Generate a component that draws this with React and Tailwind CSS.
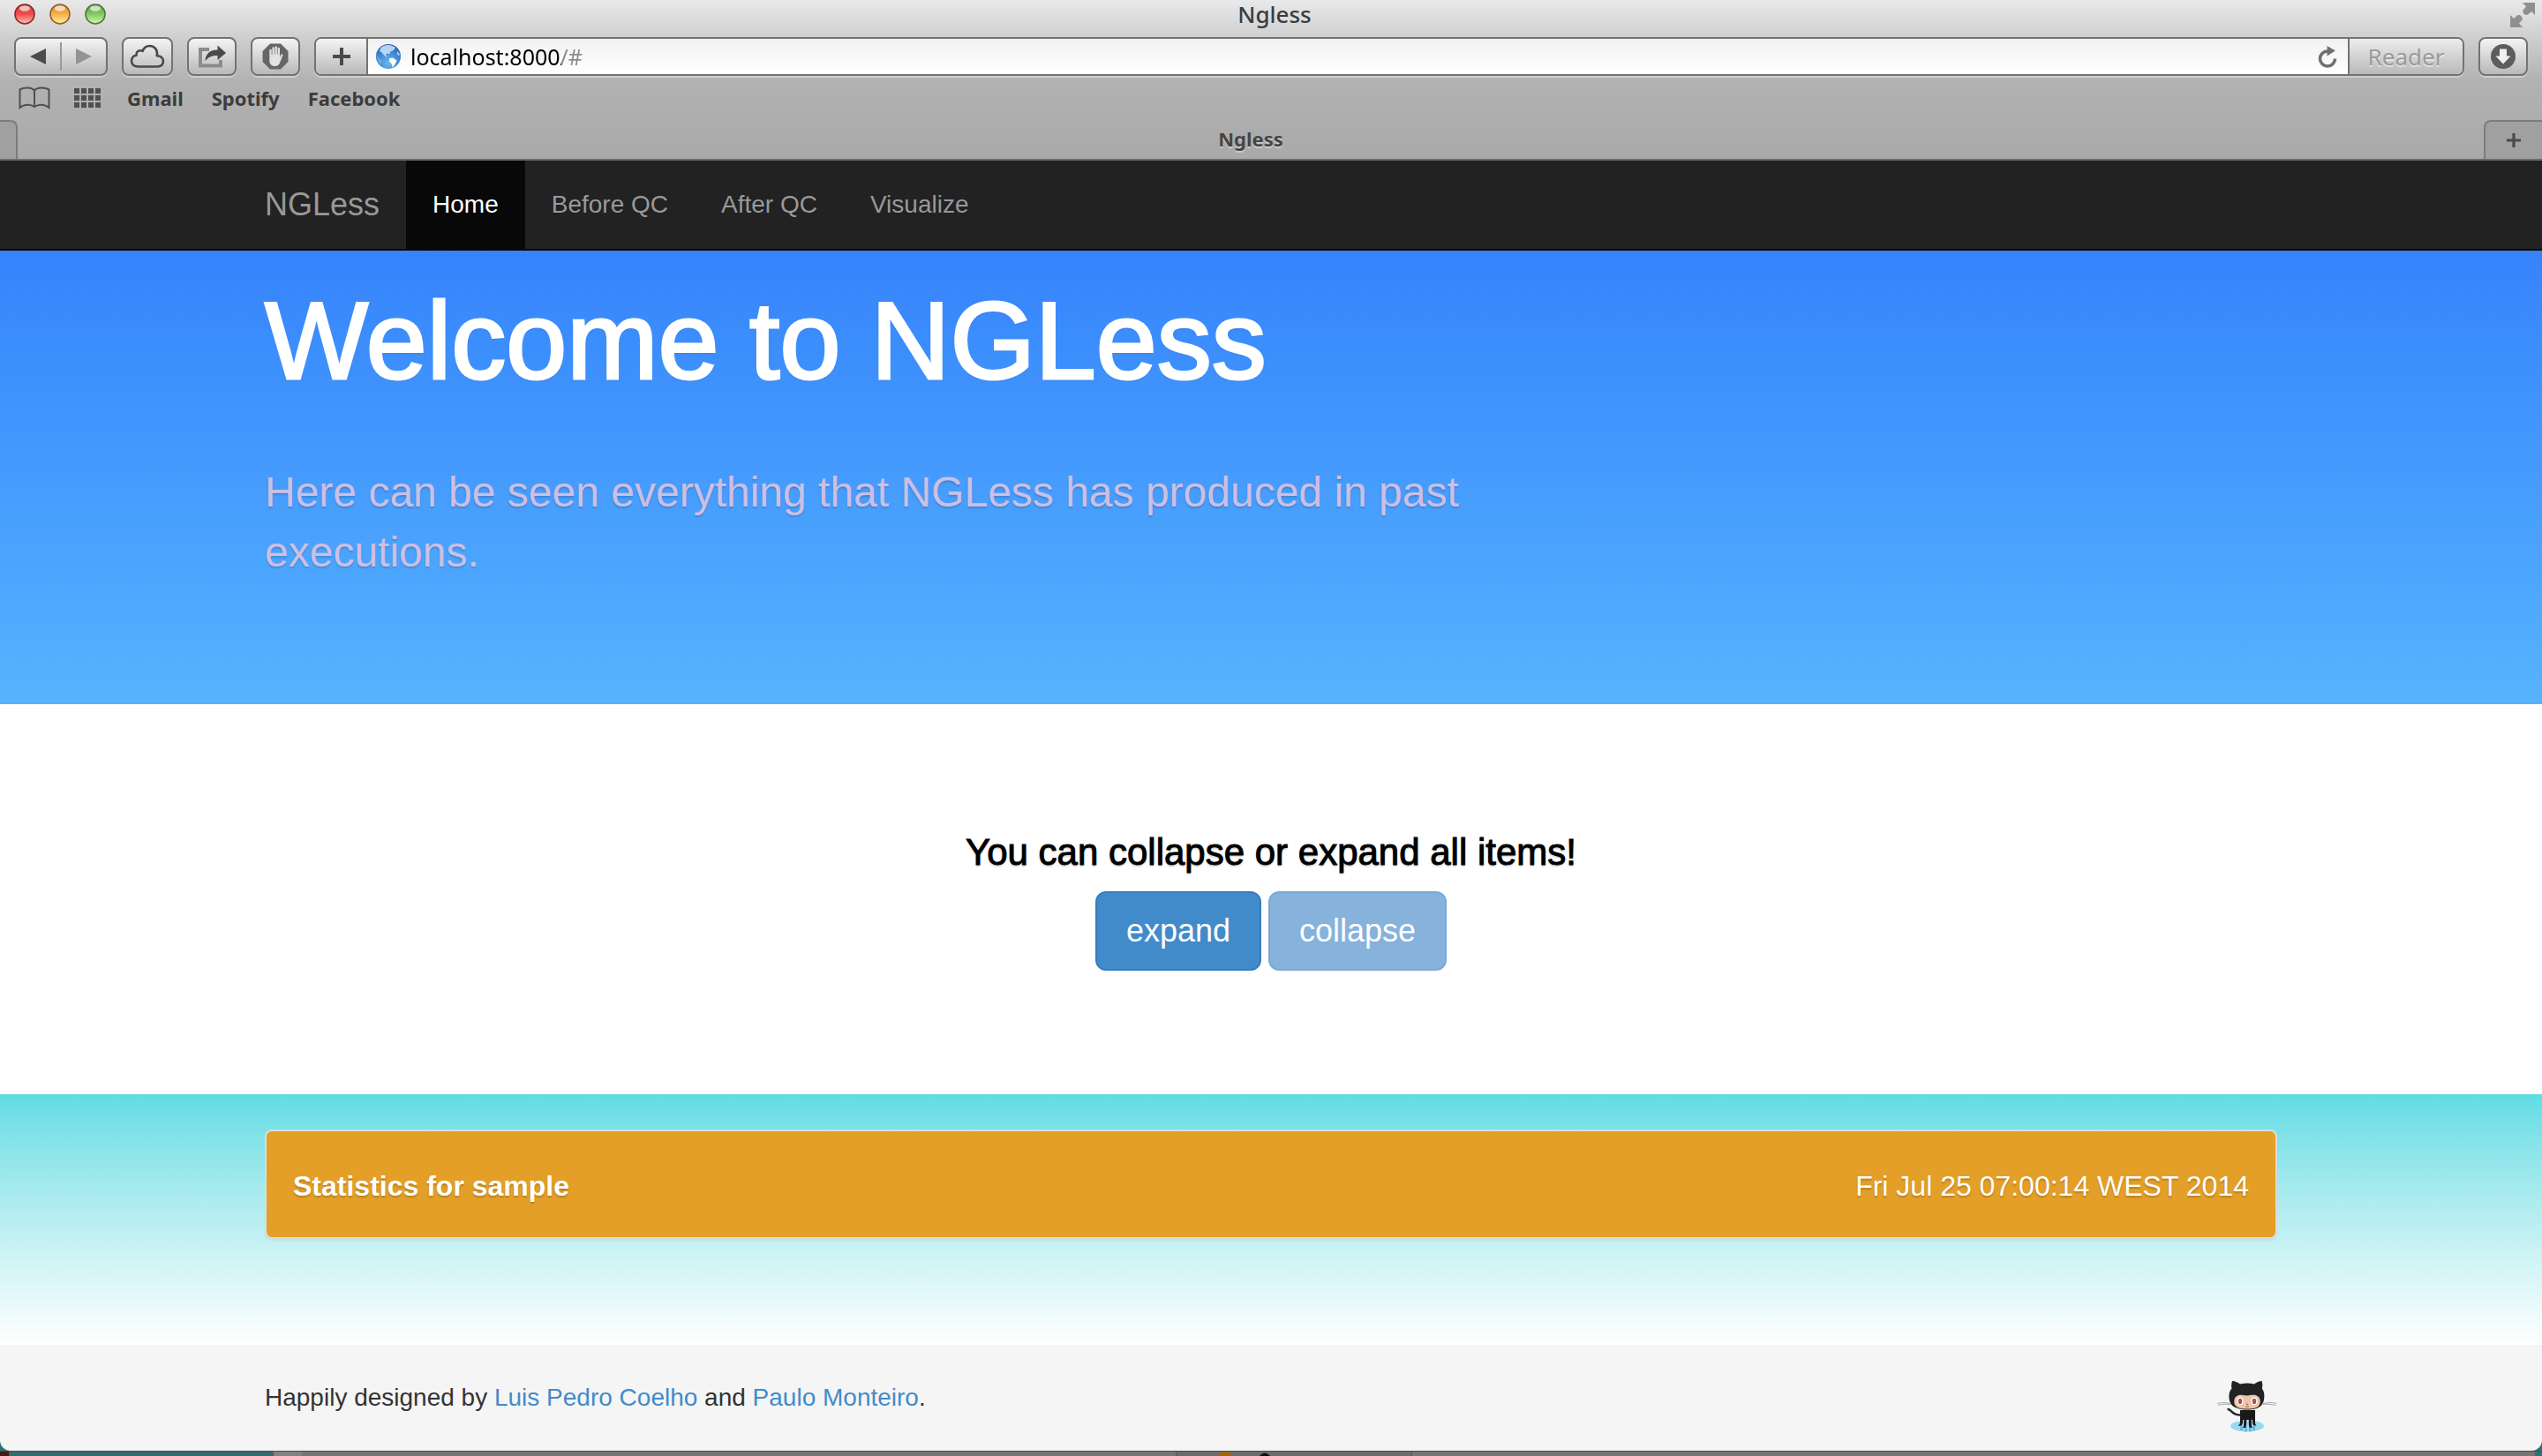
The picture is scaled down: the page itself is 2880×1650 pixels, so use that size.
const toolButton =
  "flex h-11 shrink-0 items-center justify-center rounded-[8px] border-2 border-[#737373] bg-linear-to-b from-[#f4f4f4] to-[#b9b9b9] shadow-[0_2px_0_rgba(255,255,255,0.35)]";

function Light({ label, rim, from, mid, to }) {
  const id = "light-" + label;
  return (
    <button type="button" aria-label={label} className="block size-6">
      <svg viewBox="0 0 24 24" className="size-6">
        <defs>
          <linearGradient id={id} x1="0" y1="0" x2="0" y2="1">
            <stop offset="0" stopColor={from} />
            <stop offset="0.5" stopColor={mid} />
            <stop offset="1" stopColor={to} />
          </linearGradient>
        </defs>
        <circle cx="12" cy="12" r="11" fill={"url(#" + id + ")"} stroke={rim} strokeWidth="1.6" />
        <ellipse cx="12" cy="5.6" rx="6" ry="3.2" fill="#fff" opacity="0.65" />
      </svg>
    </button>
  );
}

function Cloud() {
  return (
    <svg viewBox="0 0 40 28" className="h-7 w-10" fill="none" stroke="#484848" strokeWidth="2.6" strokeLinejoin="round">
      <path d="M9.5 25.5 C4.5 25.5 2 22.400 2 19 C2 15.500 4.500 13 7.500 12.600 C7 9.300 9.500 7 12.200 7.200 C13 7.200 13.800 7.500 14.500 8 C16 4 19 2 22.500 2 C27.500 2 31.300 6 31 11.200 C31 12 30.900 12.600 30.700 13.200 C34.500 13 38 15.600 38 19.300 C38 22.800 35.500 25.500 31.500 25.500 Z" />
    </svg>
  );
}

function Share() {
  return (
    <svg viewBox="0 0 34 28" className="h-7 w-[34px]">
      <path d="M14 6 H4 V24.500 H27 V18" fill="none" stroke="#8c8c8c" strokeWidth="4" />
      <path d="M9.500 19.500 C9.500 11 15 6.500 23.500 6.500 V1.500 L33 10 L23.500 18 V13 C17 13 12.500 14.500 9.500 19.500 Z" fill="#4a4a4a" />
    </svg>
  );
}

function Hand() {
  return (
    <svg viewBox="0 0 30 30" className="size-[30px]">
      <path d="M9 0.500 H21 L29.500 9 V21 L21 29.500 H9 L0.500 21 V9 Z" fill="#666" />
      <path d="M8.300 14 V8 a1.200 1.200 0 0 1 2.400 0 V13 h0.700 V5.500 a1.200 1.200 0 0 1 2.400 0 V12.500 h0.700 V4.500 a1.200 1.200 0 0 1 2.400 0 V12.500 h0.700 V6 a1.200 1.200 0 0 1 2.400 0 V16 L21.300 12.800 a1.200 1.200 0 0 1 2.100 1 L20.500 21 C19.500 24.500 17.500 26 14.500 26 C10.500 26 8.300 23.500 8.300 19.500 Z" fill="#e2e2e2" />
    </svg>
  );
}

function Plus({ className }) {
  return (
    <svg viewBox="0 0 20 20" className={className}>
      <path d="M10 0 V20 M0 10 H20" stroke="#4a4a4a" strokeWidth="4" />
    </svg>
  );
}

function Globe() {
  return (
    <svg viewBox="0 0 30 30" className="size-[30px] shrink-0">
      <defs>
        <radialGradient id="globe" cx="0.5" cy="0.75" r="0.75">
          <stop offset="0" stopColor="#6db8f2" />
          <stop offset="0.6" stopColor="#3f86d3" />
          <stop offset="1" stopColor="#2660ab" />
        </radialGradient>
      </defs>
      <circle cx="15" cy="15" r="14" fill="url(#globe)" />
      <path d="M6.500 5 C9 2.500 13 1.500 16 2 C19 2.500 21.500 3.500 23 5 L21 8 L17.500 9.500 L16 12.500 L13.500 11.500 L12 13 L14.500 16 L11 14.500 L7.500 10.500 L5 9 Z" fill="#d6eaff" opacity="0.8" />
      <path d="M16 17 L20 16.500 L24.500 19.500 L22.500 24 L19.500 27.500 L18.500 23 L16 20.500 Z" fill="#fff" />
      <path d="M25 9 L28 12 L27 14.500 L24.500 12 Z" fill="#cfe7fb" opacity="0.7" />
      <path d="M2 12 L4.500 17 L7.500 20 L6 24 C3 21 1.500 17 2 12 Z" fill="#bfdcf7" opacity="0.35" />
    </svg>
  );
}

function Reload() {
  return (
    <svg viewBox="0 0 22 26" className="h-[26px] w-[22px]">
      <path d="M11 7 A8.500 8.500 0 1 0 19.500 15.500" fill="none" stroke="#707070" strokeWidth="3.600" />
      <path d="M10.500 1 L20 6.500 L10.500 12.500 Z" fill="#707070" />
    </svg>
  );
}

function Download() {
  return (
    <svg viewBox="0 0 30 30" className="size-[30px]">
      <circle cx="15" cy="15" r="14" fill="#5d5d5d" />
      <path d="M11 6.500 H19 V14.500 H23.500 L15 23.500 L6.500 14.500 H11 Z" fill="#f0f0f0" />
    </svg>
  );
}

function Fullscreen() {
  return (
    <svg viewBox="0 0 28 28" className="size-7" fill="#8f8f8f">
      <path d="M14 0 H28 V14 L24 10 L20 13.500 C17 15 13.500 12 14.500 8.500 L18 4.500 Z" />
      <path d="M14 28 H0 V14 L4 18 L8 14.500 C11 13 14.500 16 13.500 19.500 L10 23.500 Z" />
    </svg>
  );
}

function Book() {
  return (
    <svg viewBox="0 0 36 26" className="h-[26px] w-9" fill="none" stroke="#505050" strokeWidth="2">
      <path d="M18 4.500 C15 1 7 0.500 1.500 3.500 V24 C7 19.500 14 20 18 23 C22 20 29 19.500 34.500 24 V3.500 C29 0.500 21 1 18 4.500 Z M18 4.500 V23" />
    </svg>
  );
}

function Grid() {
  const cells = [];
  for (let r = 0; r < 3; r++) {
    for (let c = 0; c < 4; c++) {
      cells.push(<rect key={r + "-" + c} x={c * 8} y={r * 8} width="6" height="6" />);
    }
  }
  return (
    <svg viewBox="0 0 30 22" className="h-[22px] w-[30px]" fill="#505050">
      {cells}
    </svg>
  );
}

function Octocat() {
  return (
    <svg viewBox="0 0 68 60" className="h-[60px] w-[68px]">
      <ellipse cx="34" cy="52" rx="19" ry="6.500" fill="#9ad8ef" />
      <path d="M26 52 h3 v5 h-3z M31 53 h2.500 v5.500 h-2.500z M36 53 h2.500 v5.500 h-2.500z M40 52 h3 v5 h-3z" fill="#6fb5e0" />
      <path d="M0 26.500 C5 25 9 25.500 15 26.500 M1 28.500 C6 27.200 10 27 15 27.500 M67.500 26.500 C62 25 58 25.500 52 26.500 M66.500 28.500 C61 27.200 57 27 52 27.500" fill="none" stroke="#a9a9a9" strokeWidth="1" />
      <path d="M12.500 33 C17 34 17 40 27 39.500" fill="none" stroke="#1f2a2c" strokeWidth="2.400" strokeLinecap="round" />
      <path d="M26 34 H43 V48 C43 50.500 44 51 44.500 51.500 H41.500 C40 50.500 40 48 40 45 L38.800 45 V50 C38.800 52.500 39.300 53 39.800 54 H37 C36 53 35.800 51 35.800 45 H33.200 C33.200 51 33 53 32 54 H29 C30 52.500 30.200 52 30.200 50 V45 L29 45 C29 49 28.500 51 27 51.800 H23.500 C25.500 50.500 26 49.500 26 47 Z" fill="#191919" />
      <path d="M17 1 C20 1 24 3 26 4.500 C31 3 37 3 42 4.500 C44.500 2.500 48 1 50.500 1 C51.500 4 51.500 7 50.800 9.500 C53 12.500 53.500 15.500 53.300 19 C53 28 48.500 33.500 34 33.500 C19 33.500 13.600 28 13.400 19 C13.300 15.500 14 12.500 16.500 9.500 C15.800 7 16 4 17 1 Z" fill="#222" />
      <path d="M24 17.200 C27 16.200 31 17.500 34 17.500 C37 17.500 41 16.200 44 17.200 C47.500 18.500 49 21 48.700 24.500 C48.200 31 43 32.600 34 32.600 C25 32.600 19.500 31 19.200 24.500 C19 21 20.500 18.500 24 17.200 Z" fill="#eac4ab" />
      <ellipse cx="26" cy="23.800" rx="3.500" ry="4.600" fill="#fff" />
      <ellipse cx="42" cy="23.800" rx="3.500" ry="4.600" fill="#fff" />
      <ellipse cx="26" cy="24" rx="2.200" ry="3.200" fill="#a9534c" />
      <ellipse cx="42" cy="24" rx="2.200" ry="3.200" fill="#a9534c" />
      <circle cx="34" cy="27.500" r="0.900" fill="#a9534c" />
      <path d="M32 29.800 Q34 31.300 36 29.800" fill="none" stroke="#a9534c" strokeWidth="0.900" />
    </svg>
  );
}

function BrowserChrome() {
  return (
    <header className='bg-linear-to-b from-[#e9e9e9] via-[#b2b2b2] to-[#a9a9a9] font-["Noto_Sans",sans-serif] text-[#3c3c3c]'>
      <div className="flex h-[42px] items-start justify-between px-4">
        <div className="flex w-40 gap-4 pt-1">
          <Light label="Close" rim="#8c2a2c" from="#c9494b" mid="#f04a48" to="#ffc5bd" />
          <Light label="Minimize" rim="#94602a" from="#d08a35" mid="#f6b048" to="#fff0a0" />
          <Light label="Zoom" rim="#4a7a38" from="#5f9a48" mid="#83c962" to="#d8f8b4" />
        </div>
        <div className="text-[26px] leading-8 font-medium">Ngless</div>
        <div className="-mr-2 flex w-40 justify-end">
          <button type="button" aria-label="Full screen" className="pt-[3px]">
            <Fullscreen />
          </button>
        </div>
      </div>

      <div className="flex items-center gap-4 px-4">
        <div className={toolButton + " w-[106px]"}>
          <button type="button" aria-label="Back" className="flex h-8 flex-1 items-center justify-center border-r-2 border-[#9a9a9a]">
            <svg viewBox="0 0 18 18" className="size-[18px]"><path d="M0 9 L18 0 V18 Z" fill="#4c4c4c" /></svg>
          </button>
          <button type="button" aria-label="Forward" className="flex h-8 flex-1 items-center justify-center">
            <svg viewBox="0 0 18 18" className="size-[18px]"><path d="M18 9 L0 0 V18 Z" fill="#939393" /></svg>
          </button>
        </div>
        <button type="button" aria-label="iCloud tabs" className={toolButton + " w-[58px]"}><Cloud /></button>
        <button type="button" aria-label="Share" className={toolButton + " w-14"}><Share /></button>
        <button type="button" aria-label="Block content" className={toolButton + " w-14"}><Hand /></button>
        <div className="flex h-11 flex-1 items-stretch overflow-hidden rounded-[8px] border-2 border-[#737373] bg-linear-to-b from-[#f1f1f1] to-white shadow-[0_2px_0_rgba(255,255,255,0.35)]">
          <button type="button" aria-label="Add bookmark" className="flex w-[59px] items-center justify-center border-r-2 border-[#737373] bg-linear-to-b from-[#f4f4f4] to-[#b9b9b9]">
            <Plus className="size-5" />
          </button>
          <label className="flex flex-1 items-center gap-[10px] pl-2">
            <Globe />
            <input
              aria-label="Address"
              defaultValue="localhost:8000/#"
              className="h-8 flex-1 bg-[linear-gradient(to_right,#000_171px,#8a8a8a_171px)] bg-clip-text text-[25px] leading-8 text-transparent caret-black outline-none"
            />
          </label>
          <button type="button" aria-label="Reload" className="px-3"><Reload /></button>
          <button type="button" className="w-[130px] border-l-2 border-[#737373] bg-linear-to-b from-[#ededed] to-[#b9b9b9] text-[26px] leading-8 text-[#9b9b9b] [text-shadow:0_2px_0_rgba(255,255,255,0.5)]">
            Reader
          </button>
        </div>
        <button type="button" aria-label="Downloads" className={toolButton + " w-14"}><Download /></button>
      </div>

      <nav aria-label="Bookmarks" className="flex h-[50px] items-center pl-[21px] text-[22px] leading-8 font-bold">
        <button type="button" aria-label="Bookmarks" className="mr-[27px]"><Book /></button>
        <button type="button" aria-label="Top sites" className="mr-[30px]"><Grid /></button>
        <div className="flex gap-8">
          <a href="#gmail">Gmail</a>
          <a href="#spotify">Spotify</a>
          <a href="#facebook">Facebook</a>
        </div>
      </nav>

      <div className="flex h-[46px] items-stretch border-b-2 border-[#6c6c6c]">
        <div className="w-5 rounded-tr-[8px] border-t-2 border-r-2 border-[#7c7c7c] bg-[#a0a0a0]" />
        <div className="flex-1 pt-[5px] text-center text-[22px] leading-8 font-bold text-[#454545] [text-shadow:0_2px_0_rgba(255,255,255,0.4)]">
          Ngless
        </div>
        <button type="button" aria-label="New tab" className="flex w-[66px] items-center justify-center rounded-tl-[8px] border-t-2 border-l-2 border-[#7c7c7c] bg-[#a0a0a0]">
          <Plus className="size-4" />
        </button>
      </div>
    </header>
  );
}

const links = ["Before QC", "After QC", "Visualize"];

export default function App() {
  return (
    <div className='flex min-h-screen flex-col bg-[#757575] font-["Liberation_Sans",Arial,sans-serif] text-[28px] leading-10 text-[#333]'>
      <BrowserChrome />

      <nav aria-label="Main" className="border-b-2 border-[#080808] bg-[#222] text-[#999]">
        <div className="mx-auto flex max-w-[2280px]">
          <a href="#" className="py-[30px] pr-[30px] text-[36px]">NGLess</a>
          <a href="#" aria-current="page" className="bg-[#080808] px-[30px] py-[30px] text-white">Home</a>
          {links.map((name) => (
            <a key={name} href="#" className="px-[30px] py-[30px]">{name}</a>
          ))}
        </div>
      </nav>

      <section className="bg-linear-to-b from-[#3683fc] to-[#57b3fd] pt-9 pb-[138px] [text-shadow:0_2px_2px_rgba(0,0,0,0.15)]">
        <div className="mx-auto max-w-[2280px]">
          <h1 className="text-[124px] leading-[132px] text-white [-webkit-text-stroke:3px_white]">Welcome to NGLess</h1>
          <p className="mt-[72px] max-w-[1400px] text-[48px] leading-[68px] text-[#cdbfe3]">
            Here can be seen everything that NGLess has produced in past executions.
          </p>
        </div>
      </section>

      <section className="bg-white pt-[144px] pb-[140px] text-center">
        <h2 className="text-[42px] leading-[48px] text-black [-webkit-text-stroke:1px_black] [text-shadow:0_2px_2px_rgba(0,0,0,0.2)]">
          You can collapse or expand all items!
        </h2>
        <div className="mt-5 flex justify-center gap-2 text-[36px] leading-[48px] text-white [text-shadow:0_2px_2px_rgba(0,0,0,0.15)]">
          <button type="button" className="rounded-xl border-2 border-[#357ebd] bg-[#428bca] px-[33px] py-[19px]">expand</button>
          <button type="button" className="rounded-xl border-2 border-[#7aaad6] bg-[#86b2db] px-[33px] py-[19px]">collapse</button>
        </div>
      </section>

      <section className="bg-linear-to-b from-[#5fdce3] to-white pt-10 pb-[120px]">
        <div className="mx-auto flex max-w-[2280px] items-center justify-between rounded-[8px] border-2 border-[#ddd] bg-[#e49f28] px-[30px] pt-[42px] pb-[38px] text-[32px] text-white shadow-[0_2px_2px_rgba(0,0,0,0.05)] [text-shadow:0_2px_2px_rgba(0,0,0,0.2)]">
          <h3 className="font-bold">Statistics for sample</h3>
          <time>Fri Jul 25 07:00:14 WEST 2014</time>
        </div>
      </section>

      <div className="bg-[#2f7074]">
        <footer className="rounded-b-xl bg-[#f5f5f5] pt-10 pb-5">
          <div className="mx-auto flex max-w-[2280px] items-start justify-between">
            <p>
              Happily designed by <a href="#" className="text-[#428bca]">Luis Pedro Coelho</a> and{" "}
              <a href="#" className="text-[#428bca]">Paulo Monteiro</a>.
            </p>
            <a href="#" aria-label="Project on GitHub"><Octocat /></a>
          </div>
        </footer>
      </div>

      <div className="flex min-h-[6px] flex-1 border-t border-[#4c4c4c] bg-[#767676]">
        <div className="w-[10px] bg-[#431c12]" />
        <div className="w-[300px] border-r-2 border-[#5c5c5c] bg-[#35696c]" />
        <div className="w-8 bg-[#828282]" />
        <div className="flex-1" />
        <div className="flex w-[268px] items-end gap-[30px] border-x border-[#5a5a5a] bg-[#6b6b6b] pl-[46px]">
          <svg viewBox="0 0 18 5" className="h-[5px] w-[18px]"><path d="M5 0 H13 L18 5 H0 Z" fill="#a06410" /></svg>
          <svg viewBox="0 0 12 5" className="h-[5px] w-3"><path d="M0 5 Q6 -2 12 5 Z" fill="#111" /></svg>
        </div>
        <div className="w-[1272px]" />
        <div className="w-2 bg-[#2f7074]" />
      </div>
    </div>
  );
}
